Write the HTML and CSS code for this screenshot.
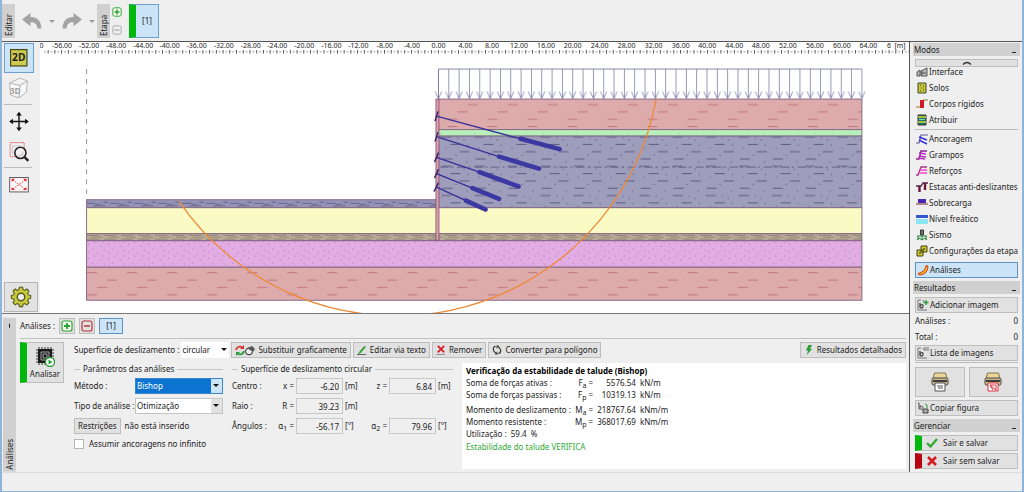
FILE: index.html
```html
<!DOCTYPE html>
<html lang="pt">
<head>
<meta charset="utf-8">
<title>Estabilidade de talude</title>
<link rel="stylesheet" href="styles.css">
</head>
<body>
<svg class="defs" aria-hidden="true">
  <symbol id="i-plus" viewBox="0 0 12 12"><rect x="1" y="1" width="10" height="10" rx="2" fill="#f4fbf4" stroke="#2fa32f" stroke-width="1.2"/><path d="M6 3v6M3 6h6" stroke="#2fa32f" stroke-width="1.8"/></symbol>
  <symbol id="i-minus" viewBox="0 0 12 12"><rect x="1" y="1" width="10" height="10" rx="2" fill="none" stroke="currentColor" stroke-width="1.2"/><path d="M3 6h6" stroke="currentColor" stroke-width="1.5"/></symbol>
  <symbol id="i-undo" viewBox="0 0 20 16"><path d="M0 6.500 8.500 0v4C15 4 19 7.500 19.500 15.500h-4C15 11 13 9.300 8.500 9.300v4z" fill="#a3a3a3"/></symbol>
  <symbol id="i-printer" viewBox="0 0 18 20"><path d="M3.500 1h11l1.500 6H2z" fill="#ecd69a" stroke="#6b5a2e" stroke-width=".8"/><rect x="1" y="6" width="16" height="7" rx="1.500" fill="#c9b98a" stroke="#454545"/><path d="M2 9h14" stroke="#3e3e3e" stroke-width="2"/><path d="M4 11h10v8H4z" fill="#fff" stroke="currentColor"/></symbol>
  <symbol id="i-pic" viewBox="0 0 12 12"><path d="M1 1h3M1 1v10h9M6 1l1 2" fill="none" stroke="#777" stroke-width="1"/><path d="M3 4v5M3 7q3-3 3 0t-3 1.500" fill="none" stroke="#333" stroke-width="1.200"/></symbol>
</svg>
<div class="window">
  <header class="toolbar">
    <span class="vtab">Editar</span>
    <div class="history">
      <button class="bare" aria-label="Desfazer"><svg class="ic-undo"><use href="#i-undo"/></svg></button>
      <span class="drop"></span>
      <button class="bare" aria-label="Refazer"><svg class="ic-undo flip"><use href="#i-undo"/></svg></button>
      <span class="drop"></span>
    </div>
    <span class="vtab">Etapa</span>
    <div class="stage-edit">
      <button class="bare" aria-label="Adicionar etapa"><svg class="ic-10"><use href="#i-plus"/></svg></button>
      <button class="bare muted" aria-label="Remover etapa"><svg class="ic-10"><use href="#i-minus"/></svg></button>
    </div>
    <button class="stage">[1]</button>
  </header>

  <div class="main">
    <div class="work">
      <div class="view">
        <nav class="tools">
          <button class="tool active" aria-label="2D"><svg viewBox="0 0 30 29"><rect x="6" y="5.500" width="17.500" height="17.500" fill="#cfc950" stroke="#444a18" stroke-width="1.300"/><text x="14.700" y="18" text-anchor="middle" class="t2d">2D</text></svg></button>
          <button class="tool" aria-label="3D"><svg viewBox="0 0 30 29"><path d="M5 9l11-5 8 3-1 12-8 6-9-3zM5 9l11 3 8-5M16 12l-1 13" fill="#f8f8f8" stroke="#b0b0b0"/><text x="11" y="20.500" text-anchor="middle" class="t3d">3D</text></svg></button>
          <hr>
          <button class="tool" aria-label="Mover"><svg viewBox="0 0 30 29"><path d="M15 6v18M6 15h18" stroke="#111" stroke-width="1.500"/><path d="M15 4.500l3 4h-6zM15 25.500l3-4h-6zM4.500 15l4-3v6zM25.500 15l-4-3v6z" fill="#111"/></svg></button>
          <button class="tool" aria-label="Zoom"><svg viewBox="0 0 30 29"><path d="M5.500 5.500h15v15h-15z" fill="none" stroke="#e0525a" stroke-dasharray="1.500 .7"/><path d="M8 9h8v8H8z" fill="none" stroke="#c5c5c5"/><circle cx="16.500" cy="16.500" r="6" fill="#f5f5f5" fill-opacity=".8" stroke="#222" stroke-width="1.700"/><path d="M14 19h5v-4" fill="none" stroke="#bbb"/><path d="M21 21l4 4" stroke="#222" stroke-width="2.600"/></svg></button>
          <hr>
          <button class="tool" aria-label="Ajustar"><svg viewBox="0 0 30 29"><rect x="5" y="7.500" width="20" height="15.500" fill="#fdf7f7" stroke="#555"/><path d="M8 10l14 10M22 10L8 20" stroke="#e8505a" stroke-dasharray="2 1"/><path d="M7 9h4l-4 3zM23 9h-4l4 3zM7 21h4l-4-3zM23 21h-4l4-3z" fill="#e0202c"/></svg></button>
          <button class="tool gear" aria-label="Configurações"><svg viewBox="0 0 30 29"><g transform="translate(15 14.500)"><path d="M-1.800-9.500h3.600l.6 2.700 1.900.8 2.300-1.500 2.400 2.400-1.500 2.300.8 1.900 2.600.6v3.400l-2.600.6-.8 1.900 1.500 2.300-2.400 2.400-2.300-1.500-1.900.8-.6 2.700h-3.600l-.6-2.700-1.900-.8-2.300 1.500-2.400-2.400 1.500-2.300-.8-1.900-2.600-.6v-3.400l2.600-.6.8-1.900-1.500-2.300 2.400-2.400 2.300 1.500 1.900-.8z" fill="#c7cb3a" stroke="#55571e" stroke-width="1.200" transform="translate(0 -1.400) scale(.95)"/><circle r="4" fill="#efefef" stroke="#55571e" stroke-width="1.500"/></g></svg></button>
        </nav>

        <svg class="canvas" viewBox="40 42 868 271" role="img" aria-label="Seção transversal do talude">
          <defs>
            <pattern id="ticks" x="437.400" y="50" width="6.720" height="4" patternUnits="userSpaceOnUse"><path d="M.5 0v3.500" stroke="#444" stroke-width=".9"/><path d="M3.860 1v1.500" stroke="#555" stroke-width=".8"/></pattern>
            <pattern id="arrows" x="432.840" y="69" width="10.317" height="30" patternUnits="userSpaceOnUse"><path d="M5.160 0v30M2 22.500l3.160 7 3.160-7" fill="none" stroke="#7c7ca8" stroke-width=".8"/></pattern>
            <pattern id="p-red" x="86" y="269" width="40" height="29.200" patternUnits="userSpaceOnUse"><path d="M0 3.500h10M20 10.800h10M10 18.100h10M0 25.400h10" transform="translate(1 0)" stroke="#b5686c" stroke-width=".8"/></pattern>
            <pattern id="p-slate" x="438" y="136" width="33" height="29.200" patternUnits="userSpaceOnUse"><path d="M3 1h10M12 8.300h10M21 15.600h10M4 22.900h10" stroke="#4b4b70" stroke-width=".8"/><path d="M25 4h1M7 12h1M17 19h1M28 26h1M19 2h1M29 9h1" stroke="#4b4b70"/></pattern>
            <pattern id="p-tan" x="86" y="234" width="17" height="4" patternUnits="userSpaceOnUse"><path d="M1 1h12M5 3h11" stroke="#7d6f60" stroke-width=".7"/></pattern>
            <pattern id="p-mag" x="86" y="241" width="20" height="14" patternUnits="userSpaceOnUse"><path d="M2 3h1M8 1h1M14 5h1M6 8h1M18 9h1M11 12h1M2 11h1M17 1h1" stroke="#9a5ea5" stroke-width=".8"/></pattern>
            <pattern id="p-low" x="86" y="200" width="24" height="8" patternUnits="userSpaceOnUse"><path d="M0 3h9q3 3 6 0M7 5.500h12M17 2h5" fill="none" stroke="#55557e" stroke-width=".8"/></pattern>
          </defs>
          <rect x="40" y="42" width="868" height="271" fill="#fff"/>
          <g class="scale">
            <text x="41.500" y="48">0</text><text x="62" y="48">-56.00</text><text x="89" y="48">-52.00</text><text x="116" y="48">-48.00</text><text x="143" y="48">-44.00</text><text x="169.500" y="48">-40.00</text><text x="196.500" y="48">-36.00</text><text x="223.500" y="48">-32.00</text><text x="250.500" y="48">-28.00</text><text x="277" y="48">-24.00</text><text x="304" y="48">-20.00</text><text x="331" y="48">-16.00</text><text x="358" y="48">-12.00</text><text x="384.500" y="48">-8.00</text><text x="411.500" y="48">-4.00</text><text x="438" y="48">0.00</text><text x="465" y="48">4.00</text><text x="491.500" y="48">8.00</text><text x="518.500" y="48">12.00</text><text x="545.500" y="48">16.00</text><text x="572" y="48">20.00</text><text x="599" y="48">24.00</text><text x="626" y="48">28.00</text><text x="653" y="48">32.00</text><text x="680" y="48">36.00</text><text x="706.500" y="48">40.00</text><text x="733.500" y="48">44.00</text><text x="760" y="48">48.00</text><text x="787" y="48">52.00</text><text x="814" y="48">56.00</text><text x="841" y="48">60.00</text><text x="867.500" y="48">64.00</text><text x="888" y="48">6</text><text x="899" y="48">[m]</text>
          </g>
          <rect x="42" y="50" width="866" height="4" fill="url(#ticks)"/>
          <path d="M86.500 69v131" stroke="#999" stroke-dasharray="5 5"/>
          <g stroke="#7d6180" stroke-width=".9">
            <path d="M438 99h423v30.500H438z" fill="#deabad"/><path d="M438 129.500h423v6.500H438z" fill="#b8efba"/><path d="M438 136h423v71.500H438z" fill="#9f9dbc"/>
            <path d="M86.500 199.500H436v8H86.500z" fill="#9593b6"/>
            <path d="M86.500 207.500H861v26H86.500z" fill="#fafac5"/><path d="M86.500 233.500H861v7H86.500z" fill="#b9ab98"/><path d="M86.500 240.500H861v26.500H86.500z" fill="#e1ade3"/><path d="M86.500 267H861v33H86.500z" fill="#deabad"/>
          </g>
          <path d="M438.500 99.500h422v29.500h-422zM87 267.500h774v32H87z" fill="url(#p-red)"/>
          <path d="M438.500 136.500h422v70.500h-422z" fill="url(#p-slate)"/>
          <path d="M440 167h421" stroke="#55557e" stroke-width=".8" stroke-dasharray="8 3 2 4"/>
          <path d="M440 133.500h421" stroke="#7fb583" stroke-width=".7" stroke-dasharray="1 16"/>
          <path d="M87 200h349v7H87z" fill="url(#p-low)"/><path d="M87 234.500h774v5H87z" fill="url(#p-tan)"/><path d="M87 241h774v25.500H87z" fill="url(#p-mag)"/>
          <path d="M438 69h423M438 99V69" fill="none" stroke="#7c7ca8" stroke-width=".9"/>
          <rect x="432.840" y="69" width="433.300" height="30" fill="url(#arrows)"/>
          <rect x="435.500" y="99" width="3" height="141" fill="#dba2b2" stroke="#85496c" stroke-width=".8"/>
          <path d="M178.700 201A263.600 263.600 0 0 0 655.500 99" fill="none" stroke="#ee8a35" stroke-width="1.300"/>
          <path d="M436 116l84 22.700M436 136.500l62.500 20M436 157.300l43 14.700M436 173.500l36 14.500M436 187l29.500 13.500" stroke="#37309a" stroke-width="1.400"/>
          <path d="M520 138.700l39 10.300M498.500 156.500l40 12M479 172l39 14.300M472 188l26.500 10.700M465.500 200.500l19.500 8.800" stroke="#3c38a2" stroke-width="4.600" stroke-linecap="round"/>
          <path d="M437.500 111.500l-3 9.500M437.500 132l-3 9.500M438 152.500l-4 9.500M438 169l-4 9M438 182.500l-4.500 9" stroke="#36206f" stroke-width="1.400"/>
        </svg>
      </div>

      <section class="panel">
        <div class="vtab side"><span>Análises</span><i></i></div>
        <div class="panel-body">
          <div class="line">
            <span>Análises :</span>
            <button class="btn sq" aria-label="Adicionar análise"><svg class="ic-12"><use href="#i-plus"/></svg></button>
            <button class="btn sq red" aria-label="Remover análise"><svg class="ic-12"><use href="#i-minus"/></svg></button>
            <button class="btn one">[1]</button>
          </div>
          <div class="analysis">
            <button class="btn run"><svg viewBox="0 0 20 20"><path d="M4 0v18M7 0v18M10 0v18M13 0v18M16 0v18M1 3h18M1 6h18M1 9h18M1 12h18M1 15h18" stroke="#333"/><rect x="3" y="2" width="14" height="14" fill="#1b1b1b"/><path d="M6 5h8v8H6zM8 7h4v4H8z" fill="none" stroke="#ddd" stroke-width=".7"/><circle cx="15" cy="15" r="4.500" fill="#fff" stroke="#289c34" stroke-width="1.300"/><path d="M13.500 12.500l4 2.500-4 2.500z" fill="#289c34"/></svg><span>Analisar</span></button>
            <div class="content">
              <div class="commands">
                <label for="surf">Superfície de deslizamento :</label>
                <span class="combo plain"><select id="surf"><option>circular</option></select></span>
                <button class="btn"><svg class="ic-wide" viewBox="0 0 20 11"><path d="M1 5a4 4 0 0 1 7-2" fill="none" stroke="#d5352f" stroke-width="1.800"/><path d="M9 6a4 4 0 0 1-7 2" fill="none" stroke="#279b3a" stroke-width="1.800"/><path d="M9 0v4H5z" fill="#d5352f"/><path d="M1 11V7h4z" fill="#279b3a"/><ellipse cx="14" cy="6.500" rx="3.500" ry="3.300" fill="#eee" stroke="#222"/><path d="M12 3l5-2 3 3-2 3z" fill="#555"/></svg>Substituir graficamente</button>
                <button class="btn"><svg class="ic-10" viewBox="0 0 11 11"><path d="M2 8l6-7 2 1-6 7-3 1z" fill="#34a53b"/><path d="M0 10.500h10" stroke="#555"/></svg>Editar via texto</button>
                <button class="btn"><svg class="ic-10" viewBox="0 0 11 11"><path d="M2 1l7 7M9 1L2 8" stroke="#d81e25" stroke-width="2"/><path d="M0 10.500h10" stroke="#888"/></svg>Remover</button>
                <button class="btn"><svg class="ic-10" viewBox="0 0 11 11"><path d="M4 1.500Q1 2 1.500 5t3 4M7 9.500Q10 9 9.500 6t-3-4" fill="none" stroke="#333" stroke-width="1.300"/><path d="M3 10.500h3V7zM8 .5H5V4z" fill="#333"/></svg>Converter para polígono</button>
                <button class="btn push"><svg class="ic-10" viewBox="0 0 11 11"><path d="M5 0h4L6.500 4H9l-6 7 1.500-5H2z" fill="#2f9b36"/></svg>Resultados detalhados</button>
              </div>
              <div class="groups">
                <fieldset class="params">
                  <legend>Parâmetros das análises</legend>
                  <label for="met">Método :</label><span class="combo focus"><select id="met"><option>Bishop</option></select></span>
                  <label for="tipo">Tipo de análise :</label><span class="combo"><select id="tipo"><option>Otimização</option></select></span>
                  <div class="both"><button class="btn">Restrições</button><span>não está inserido</span></div>
                  <label class="both check"><input type="checkbox">Assumir ancoragens no infinito</label>
                </fieldset>
                <fieldset class="circle">
                  <legend>Superfície de deslizamento circular</legend>
                  <span>Centro :</span><label for="cx">x =</label><input id="cx" value="-6.20" readonly><span>[m]</span><label for="cz">z =</label><input id="cz" value="6.84" readonly><span>[m]</span>
                  <span>Raio :</span><label for="r">R =</label><input id="r" value="39.23" readonly><span class="rest">[m]</span>
                  <span>Ângulos :</span><label for="a1">α<sub>1</sub> =</label><input id="a1" value="-56.17" readonly><span>[°]</span><label for="a2">α<sub>2</sub> =</label><input id="a2" value="79.96" readonly><span>[°]</span>
                </fieldset>
                <div class="report">
                  <h2>Verificação da estabilidade de talude (Bishop)</h2>
                  <table>
                    <tr><td>Soma de forças ativas :</td><td>F<sub>a</sub> =</td><td>5576.54</td><td>kN/m</td></tr>
                    <tr><td>Soma de forças passivas :</td><td>F<sub>p</sub> =</td><td>10319.13</td><td>kN/m</td></tr>
                    <tr class="gap"><td>Momento de deslizamento :</td><td>M<sub>a</sub> =</td><td>218767.64</td><td>kNm/m</td></tr>
                    <tr><td>Momento resistente :</td><td>M<sub>p</sub> =</td><td>368017.69</td><td>kNm/m</td></tr>
                  </table>
                  <p>Utilização :&nbsp; 59.4 &nbsp;%</p>
                  <p class="ok">Estabilidade do talude VERIFICA</p>
                </div>
              </div>
            </div>
          </div>
        </div>
      </section>
    </div>

    <aside class="sidebar">
      <h3>Modos<i></i></h3>
      <button class="btn up" aria-label="Rolar para cima"><svg viewBox="0 0 10 4"><path d="M1 3.500q4-4 8 0" fill="none" stroke="#333" stroke-width="1.300"/></svg></button>
      <nav class="modes first">
        <button><svg viewBox="0 0 12 12"><path d="M1 10V6l3-2v6zM5 10V5l6-3v8z" fill="#bbb" stroke="#555"/><path d="M6 7h4M6 5v4" stroke="#555"/></svg>Interface</button>
        <button><svg viewBox="0 0 12 12"><path d="M2 1h8v10H2z" fill="#c3c62c" stroke="#444"/><path d="M4 3h1M7 4h1M5 6h1M7 8h1M4 9h1" stroke="#444"/></svg>Solos</button>
        <button><svg viewBox="0 0 12 12"><path d="M0 9h4M7 2h5" stroke="#a17424"/><path d="M4 2h4v8H4z" fill="#cf1a23"/></svg>Corpos rígidos</button>
        <button><svg viewBox="0 0 12 12"><path d="M2 1h8v10H2z" fill="#187875" stroke="#333"/><path d="M2 3h8M2 8h8" stroke="#dfd22d" stroke-width="1.600"/><path d="M3 5.500h6" stroke="#7be0a0"/></svg>Atribuir</button>
      </nav>
      <hr>
      <nav class="modes">
        <button><svg viewBox="0 0 12 12"><path d="M0 10h3l2-8h7" fill="none" stroke="#665a9a" stroke-width="1.200"/><path d="M3 4l8 3M3 7l8 4" stroke="#3933d5" stroke-width="1.400"/></svg>Ancoragem</button>
        <button><svg viewBox="0 0 12 12"><path d="M0 10h3l2-8h6" fill="none" stroke="#8a2596" stroke-width="1.500"/><path d="M3 4l7 1M3 7l7 1M2 9l7 1" stroke="#b92dc1" stroke-width="1.300"/></svg>Grampos</button>
        <button><svg viewBox="0 0 12 12"><path d="M0 10h2l3-8h6" fill="none" stroke="#a8328b" stroke-width="1.300"/><path d="M4 5h7M3 8h8" stroke="#ef48ce" stroke-width="1.300"/></svg>Reforços</button>
        <button><svg viewBox="0 0 12 12"><path d="M0 5h5l2-3h5" fill="none" stroke="#4d2345" stroke-width="1.300"/><path d="M3.500 5v6M9 2v7" stroke="#6a1641" stroke-width="2.400"/></svg>Estacas anti-deslizantes</button>
        <button><svg viewBox="0 0 12 12"><path d="M2 2h8v4H2z" fill="#4727b3"/><path d="M0 7h12" stroke="#b08a8a" stroke-width="2"/></svg>Sobrecarga</button>
        <button><svg viewBox="0 0 12 12"><path d="M0 2h12v3H0z" fill="#3157d1"/><path d="M0 6h12v5H0z" fill="#8be5f4"/><path d="M1 5.500h10" stroke="#fff" stroke-dasharray="2 1"/></svg>Nível freático</button>
        <button><svg viewBox="0 0 12 12"><path d="M4.500 1h3v5h-3z" fill="#777" stroke="#333"/><path d="M1 7h10M2 7v4M6 7v4M10 7v4M1 11l2-2 3 2 3-2 2 2" fill="none" stroke="#24813a"/></svg>Sismo</button>
        <button><svg viewBox="0 0 12 12"><path d="M1 5h6v6H1zM5 1h6v6H5z" fill="#d0c92c" stroke="#454314"/><path d="M7 4h2M3 8h2" stroke="#222"/></svg>Configurações da etapa</button>
      </nav>
      <button class="btn wide sel"><svg viewBox="0 0 12 12"><path d="M9 1.500l2 .5q0 8-8 9-2 0-2-1.500Q8 8 9 1.500z" fill="#f2b11a" stroke="#d33c20"/></svg>Análises</button>
      <h3>Resultados<i></i></h3>
      <button class="btn wide"><svg viewBox="0 0 12 12"><use href="#i-pic"/><path d="M9 1v5M6.500 3.500h5" stroke="#2a9e3b" stroke-width="1.400"/></svg>Adicionar imagem</button>
      <dl><dt>Análises :</dt><dd>0</dd><dt>Total :</dt><dd>0</dd></dl>
      <button class="btn wide"><svg viewBox="0 0 12 12"><use href="#i-pic"/><path d="M7 1h5M7 3h5" stroke="#777"/></svg>Lista de imagens</button>
      <hr>
      <div class="prints">
        <button class="btn" aria-label="Imprimir"><svg viewBox="0 0 18 20"><use href="#i-printer"/><path d="M6 14h6M7 16h5" stroke="#555"/></svg></button>
        <button class="btn pdf" aria-label="Imprimir PDF"><svg viewBox="0 0 18 20"><use href="#i-printer"/><path d="M6 13h6v5zM6 13l3 5" fill="none" stroke="#e03040"/></svg></button>
      </div>
      <button class="btn wide copy"><svg viewBox="0 0 12 12"><path d="M1 1h1v6h4M3 3v3M3 5q3-2 3 1" fill="none" stroke="#555"/><path d="M6 7h5v4H6z" fill="#aaa" stroke="#444"/><path d="M8 2q3 0 2 4" fill="none" stroke="#289b39"/></svg>Copiar figura</button>
      <h3>Gerenciar<i></i></h3>
      <button class="btn wide exit save"><svg viewBox="0 0 12 12"><path d="M1 6l3.500 3.500L11 2" fill="none" stroke="#36a934" stroke-width="2.400"/></svg>Sair e salvar</button>
      <button class="btn wide exit"><svg viewBox="0 0 12 12"><path d="M2 2l8 8M10 2l-8 8" stroke="#d81922" stroke-width="2.600"/></svg>Sair sem salvar</button>
    </aside>
  </div>
  <footer></footer>
</div>
</body>
</html>
```
FILE: styles.css
```css
* { box-sizing: border-box; }
body {
  margin: 0;
  font: 8px/12px "Noto Sans", "Open Sans", sans-serif;
  color: #222;
  background: #efefef;
}
button, input, select { font: inherit; color: inherit; margin: 0; }
button { padding: 0; border: 0; background: none; }
svg { display: block; flex: none; }
.defs { position: absolute; width: 0; height: 0; }
hr { height: 1px; margin: 0; border: 0; background: #bcbcbc; }
sub { font-size: 7px; line-height: 0; vertical-align: -2px; }

.window {
  display: flex;
  flex-direction: column;
  min-height: 100vh;
  border: solid #8fb5d8;
  border-width: 0 2px 1px;
}

/* top toolbar */
.toolbar {
  display: flex;
  height: 42px;
  padding: 4px 0 3px;
  border-bottom: 1px solid #555;
}
.vtab {
  width: 13px;
  padding: 2px 0;
  background: #d0d0d0;
  writing-mode: vertical-rl;
  transform: rotate(180deg);
  line-height: 13px;
}
.history { display: flex; align-items: center; gap: 7px; padding: 0 2px 0 7px; }
.ic-undo { width: 20px; height: 16px; }
.flip { transform: scaleX(-1); }
.drop { border: 3px solid transparent; border-top-color: #999; border-bottom: 0; }
.stage-edit { display: flex; flex-direction: column; justify-content: space-between; padding: 3px 7px 3px 2px; }
.ic-10 { width: 10px; height: 10px; }
.ic-12 { width: 12px; height: 12px; }
.muted { color: #aaa; }
.stage {
  width: 30px;
  border: 1px solid #6da0d0;
  border-left: 7px solid #00b80c;
  background: #cce4f7;
}

.main { display: flex; flex: 1; }
.work { flex: 1; min-width: 0; display: flex; flex-direction: column; }
.view { display: flex; border-bottom: 1px solid #777; }
.tools { width: 38px; padding: 1px 0 1px 2px; display: flex; flex-direction: column; align-items: flex-start; }
.tool svg { width: 28px; height: 28px; }
.tool { border: 1px solid transparent; }
.tool.active { background: #cce4f7; border-color: #6da0d0; }
.tools hr { width: 28px; margin: 1px 0; }
.tool.gear { margin-top: auto; padding: 0 2px; border-color: #b5b5b5; background: #e2e2e2; }
.t2d { font: bold 11px "Noto Sans", sans-serif; fill: #222; }
.t3d { font: bold 9px "Noto Sans", sans-serif; fill: #a5a5a5; }
.canvas { flex: 1; min-width: 0; height: auto; }
.scale { font: 7px "Noto Sans", sans-serif; text-anchor: middle; fill: #222; }

/* buttons and fields */
.btn {
  display: flex;
  align-items: center;
  gap: 3px;
  height: 16px;
  padding: 0 3px;
  border: 1px solid #bdbdbd;
  background: #e1e1e1;
  white-space: nowrap;
}
.combo { position: relative; display: block; background: #fff; border: 1px solid #c4c4c4; }
.combo select {
  display: block;
  width: 100%;
  height: 14px;
  padding: 0 14px 0 1px;
  border: 0;
  border-radius: 0;
  appearance: none;
  background: none;
}
.combo::after {
  content: "";
  position: absolute;
  right: 3px;
  top: 5px;
  border: 3px solid transparent;
  border-top-color: #111;
  pointer-events: none;
}
.combo::before {
  content: "";
  position: absolute;
  right: 0;
  top: 0;
  bottom: 0;
  width: 11px;
  background: #e1e1e1;
  pointer-events: none;
}
.combo.plain { width: 48px; border-color: #fff; }
.combo.plain select { padding: 0; }
.combo.plain::before { display: none; }
.combo.plain::after { right: 1px; }
.combo.focus { border-color: #3a86cc; background: #0c74d0; color: #fff; }
.combo.focus::before { background: #cce4f7; }

/* analysis panel */
.panel { display: flex; flex: 1; padding: 4px 3px 0 1px; gap: 4px; }
.side { display: flex; justify-content: space-between; width: 13px; }
.side i { width: 1px; height: 4px; margin: 0 6px 4px 0; background: #222; }
.panel-body { flex: 1; min-width: 0; }
.line { display: flex; align-items: center; gap: 4px; padding-bottom: 4px; border-bottom: 1px solid #c0c0c0; }
.sq { width: 16px; padding: 0 1px; }
.red { color: #b8323c; }
.one { width: 24px; justify-content: center; background: #cce4f7; border-color: #5a93c8; }
.analysis { display: flex; gap: 10px; padding-top: 3px; align-items: flex-start; }
.run {
  flex-direction: column;
  gap: 1px;
  width: 44px;
  height: 41px;
  padding: 4px 3px;
  border-left: 7px solid #00b80c;
}
.run svg { width: 20px; height: 20px; }
.content { flex: 1; min-width: 0; }
.commands { display: flex; align-items: center; gap: 2px; }
.commands .push { margin-left: auto; }
.ic-wide { width: 20px; height: 11px; }
.groups { display: flex; gap: 9px; padding-top: 5px; }
fieldset { display: grid; align-content: start; align-items: center; margin: 0; padding: 3px 0 0; border: 0; border-top: 1px solid #c6c6c6; min-width: 0; height: min-content; row-gap: 4px; }
.params { width: 149px; grid-template-columns: 61px 88px; }
legend { margin-left: 6px; padding: 0 3px; }
.both { grid-column: 1 / -1; display: flex; align-items: center; gap: 4px; }
.check { gap: 5px; }
.check input { width: 10px; height: 10px; appearance: none; background: #fff; border: 1px solid #b8b8b8; }
.circle { width: 221px; grid-template-columns: 36px 24px 47px 18px 22px 47px 15px; column-gap: 2px; }
.circle label { text-align: right; }
.circle input { width: 47px; height: 16px; padding: 0 3px; border: 1px solid #c8c8c8; background: #efefef; text-align: right; outline: 0; }
.rest { grid-column: span 4; }
.report { flex: 1; min-width: 0; min-height: 106px; padding: 2px 4px; background: #fff; }
.report h2 { margin: 0; font-size: 8px; line-height: 12px; color: #000; }
.report table { border-collapse: collapse; }
.report td { padding: 0 4px 0 0; height: 12px; line-height: 12px; white-space: nowrap; }
.report td:nth-child(2), .report td:nth-child(3) { text-align: right; }
.report .gap td { padding-top: 3px; }
.report p { margin: 0; }
.report .ok { margin-top: 1px; color: #30a836; }

/* sidebar */
.sidebar { width: 113px; padding: 1px 2px 0 3px; border-left: 1px solid #555; display: flex; flex-direction: column; }
.sidebar h3 { display: flex; justify-content: space-between; margin: 0; padding: 0 4px 0 1px; font-weight: 400; font-size: 8px; line-height: 13px; background: #d0d0d0; }
.sidebar h3 i { width: 4px; height: 1px; margin-top: 9px; background: #222; }
.sidebar > .btn, .sidebar > hr, .modes, dl, .prints { margin-left: 2px; margin-right: 2px; }
.up { height: 8px; justify-content: center; margin-top: 3px; }
.up svg { width: 10px; height: 4px; }
.modes { display: flex; flex-direction: column; }
.modes.first { margin-top: -3px; }
.modes button { display: flex; align-items: center; gap: 1px; height: 16px; padding-left: 1px; text-align: left; white-space: nowrap; }
.modes svg, .wide svg { width: 12px; height: 12px; }
.sidebar > hr { margin-top: 1px; margin-bottom: 1px; }
.wide { gap: 1px; padding: 0 1px; }
.sel { margin-top: 3px; margin-bottom: 3px; background: #cce4f7; border-color: #5a93c8; }
h3 + .wide { margin-top: 3px; }
dl { display: grid; grid-template-columns: 1fr auto; margin-top: 0; margin-bottom: 0; line-height: 16px; }
dd { margin: 0; }
.prints { display: grid; grid-template-columns: 1fr 1fr; gap: 4px; padding: 3px 0; }
.prints .btn { height: 30px; justify-content: center; color: #555; }
.prints .pdf { color: #e03040; }
.prints svg { width: 18px; height: 20px; }
.copy { margin-bottom: 3px; }
.exit { border-left: 7px solid #b80010; gap: 5px; padding-left: 4px; margin-bottom: 2px; }
.exit.save { border-left-color: #00b80c; }
footer { flex: none; height: 19px; border-top: 1px solid #dcdcdc; }
```
